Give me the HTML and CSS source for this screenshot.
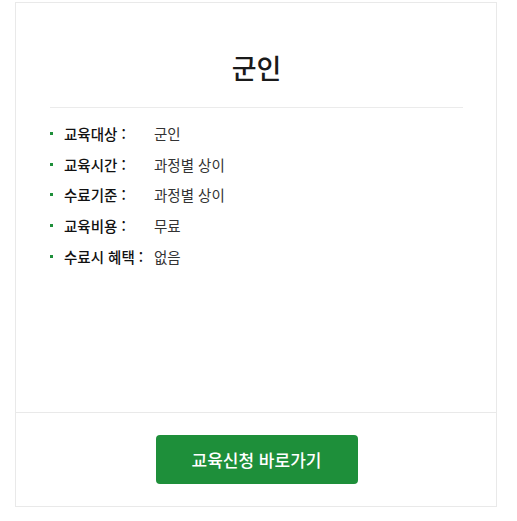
FILE: index.html
```html
<!DOCTYPE html>
<html lang="ko">
<head>
<meta charset="utf-8">
<link rel="stylesheet" href="styles.css">
</head>
<body>
<div class="card">
  <div class="card-body">
    <h2 class="title">군인</h2>
    <ul class="info">
      <li><span class="label">교육대상 :</span><span class="value">군인</span></li>
      <li><span class="label">교육시간 :</span><span class="value">과정별 상이</span></li>
      <li><span class="label">수료기준 :</span><span class="value">과정별 상이</span></li>
      <li><span class="label">교육비용 :</span><span class="value">무료</span></li>
      <li><span class="label">수료시 혜택 :</span><span class="value">없음</span></li>
    </ul>
  </div>
  <div class="card-foot">
    <a class="btn" href="#">교육신청 바로가기</a>
  </div>
</div>
</body>
</html>
```
FILE: styles.css
```css
* { box-sizing: border-box; }
html, body { margin: 0; background: #fff; }
body {
  padding: 2px 0 0 15px;
  font-family: "Noto Sans CJK KR", "Noto Sans", sans-serif;
  color: #222;
}
.card {
  width: 482px;
  height: 505px;
  border: 1px solid #e9e9e9;
  display: flex;
  flex-direction: column;
}
.card-body {
  flex: 1;
  padding: 0 33px 0 34px;
}
.title {
  margin: 0;
  padding: 47px 0 21px;
  border-bottom: 1px solid #ebebeb;
  text-align: center;
  font-size: 27px;
  line-height: 36px;
  font-weight: 500;
  color: #1a1a1a;
}
.info {
  list-style: none;
  margin: 0;
  padding: 10px 0 0;
}
.info li {
  display: flex;
  align-items: center;
  height: 30.75px;
  font-size: 14.5px;
}
.info li::before {
  content: "";
  width: 3px;
  height: 3px;
  background: #1e8f3a;
  margin: 0 11px 0 0;
  flex: none;
}
.label {
  width: 90px;
  flex: none;
  font-weight: 500;
  color: #111;
  white-space: nowrap;
}
.value {
  color: #333;
}
.card-foot {
  height: 94px;
  border-top: 1px solid #e9e9e9;
  display: flex;
  justify-content: center;
  padding-top: 22px;
}
.btn {
  width: 202px;
  height: 49px;
  background: #1e8f3a;
  border-radius: 4px;
  color: #fff;
  text-decoration: none;
  font-size: 17px;
  font-weight: 500;
  display: flex;
  align-items: center;
  justify-content: center;
  margin-left: 1px;
}
```
